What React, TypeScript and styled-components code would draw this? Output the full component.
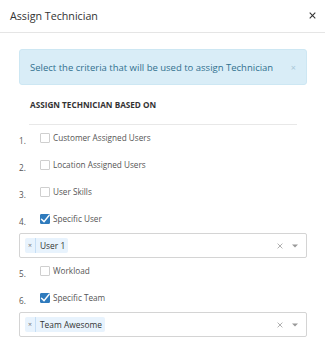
import React from "react";
import styled, { createGlobalStyle } from "styled-components";

const Global = createGlobalStyle`
  html, body { margin: 0; padding: 0; background: #fff; }
  body { font-family: "Open Sans", "Noto Sans", Arial, sans-serif; color: #333; }
  * { box-sizing: border-box; }
`;

const Modal = styled.div`
  width: 325px;
  height: 360px;
  background: #fff;
  display: flex;
  flex-direction: column;
`;

const Header = styled.div`
  height: 33px;
  padding: 0 10px 1px 10px;
  border-bottom: 1px solid #e5e5e5;
  display: flex;
  align-items: center;
  justify-content: space-between;
`;

const Title = styled.div`
  font-size: 10.7px;
  color: #333;
`;

const CloseBtn = styled.div`
  width: 9px;
  height: 9px;
  display: flex;
  align-items: center;
  justify-content: center;
  margin-right: -2px;
`;

const Body = styled.div`
  padding: 16px 18px 0 19px;
  display: flex;
  flex-direction: column;
`;

const Alert = styled.div`
  height: 36px;
  background: #d9edf7;
  border: 1px solid #cde7f3;
  border-radius: 3px;
  display: flex;
  align-items: center;
  justify-content: space-between;
  padding: 0 10px 0 10px;
  color: #31708f;
  font-size: 9.5px;
`;

const AlertClose = styled.span`
  color: #a9c8d8;
  font-size: 9px;
  line-height: 1;
`;

const SectionTitle = styled.div`
  margin: 14px 10px 0 10px;
  padding: 0 0 14px 1px;
  border-bottom: 1px solid #e8e8e8;
  font-size: 8.2px;
  font-weight: 700;
  color: #333;
  line-height: 11px;
`;

const Row = styled.div`
  height: 27px;
  display: flex;
  align-items: center;
`;

const Num = styled.span`
  width: 21px;
  font-size: 8.2px;
  color: #555;
  margin-top: 4px;
`;

const Box = styled.span<{ $checked?: boolean }>`
  width: 10px;
  height: 10px;
  border: 1px solid ${(p) => (p.$checked ? "#2f7bbd" : "#cfcfcf")};
  background: ${(p) => (p.$checked ? "#2f7bbd" : "#fff")};
  border-radius: 1px;
  display: flex;
  align-items: center;
  justify-content: center;
  margin-right: 3px;
  margin-top: -1px;
  overflow: visible;
`;

const Label = styled.span`
  font-size: 8.2px;
  color: #555;
  margin-top: -3px;
`;

const Select = styled.div`
  height: 25px;
  border: 1px solid #d4d4d4;
  border-radius: 2px;
  display: flex;
  align-items: center;
  padding: 0 8px 0 5px;
`;

const Tag = styled.div`
  height: 15px;
  background: #e8f3fd;
  border-radius: 2px;
  display: flex;
  align-items: center;
  font-size: 8.4px;
  color: #333;
`;

const TagRemove = styled.span`
  width: 11px;
  height: 15px;
  display: flex;
  align-items: center;
  justify-content: center;
  border-right: 1px solid #c5def5;
  color: #777;
  font-size: 7px;
`;

const TagText = styled.span`
  padding: 0 3px 0 4px;
`;

const Spacer = styled.div`
  flex: 1;
`;

const Indicators = styled.div`
  display: flex;
  align-items: center;
  gap: 9px;
`;

const CheckIcon = () => (
  <svg width="10" height="10" viewBox="0 0 10 10" style={{ overflow: "visible" }}>
    <path d="M1.5 5.2 L4 7.6 L9.2 1.2" stroke="#fff" strokeWidth="1.4" fill="none" strokeLinecap="round" />
  </svg>
);

const Crit = ({ n, label, checked }: { n: number; label: string; checked?: boolean }) => (
  <Row>
    <Num>{n}.</Num>
    <Box $checked={checked}>{checked && <CheckIcon />}</Box>
    <Label>{label}</Label>
  </Row>
);

const XIcon = ({ size, color, sw }: { size: number; color: string; sw: number }) => (
  <svg width={size} height={size} viewBox="0 0 10 10">
    <path d="M1 1 L9 9 M9 1 L1 9" stroke={color} strokeWidth={sw} fill="none" />
  </svg>
);

const MultiSelect = ({ value }: { value: string }) => (
  <Select>
    <Tag>
      <TagRemove>×</TagRemove>
      <TagText>{value}</TagText>
    </Tag>
    <Spacer />
    <Indicators>
      <XIcon size={6} color="#999" sw={1.3} />
      <svg width="6" height="4" viewBox="0 0 6 4">
        <path d="M0 0.5 L6 0.5 L3 3.5 Z" fill="#999" />
      </svg>
    </Indicators>
  </Select>
);

export default function App() {
  return (
    <Modal>
      <Global />
      <Header>
        <Title>Assign Technician</Title>
        <CloseBtn>
          <XIcon size={7} color="#333" sw={1.5} />
        </CloseBtn>
      </Header>
      <Body>
        <Alert>
          <span>Select the criteria that will be used to assign Technician</span>
          <AlertClose>×</AlertClose>
        </Alert>
        <SectionTitle>ASSIGN TECHNICIAN BASED ON</SectionTitle>
        <Crit n={1} label="Customer Assigned Users" />
        <Crit n={2} label="Location Assigned Users" />
        <Crit n={3} label="User Skills" />
        <Crit n={4} label="Specific User" checked />
        <MultiSelect value="User 1" />
        <Crit n={5} label="Workload" />
        <Crit n={6} label="Specific Team" checked />
        <MultiSelect value="Team Awesome" />
      </Body>
    </Modal>
  );
}
